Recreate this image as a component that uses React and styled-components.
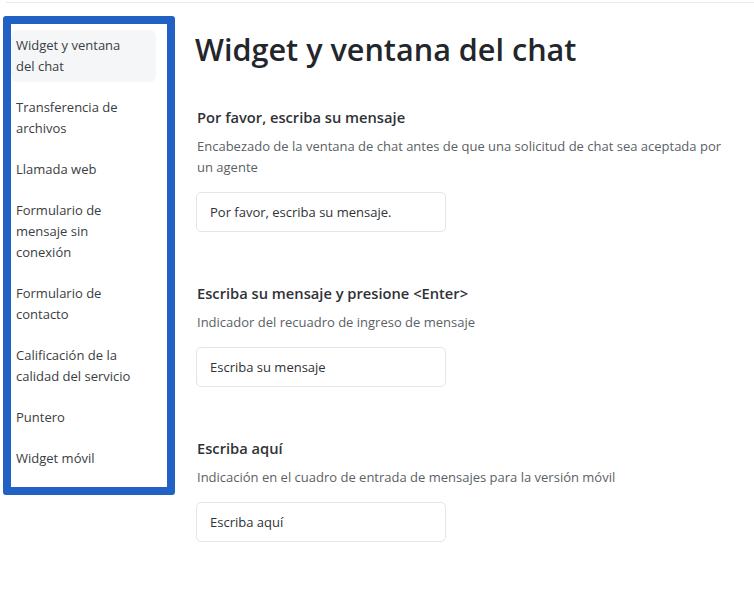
import React from 'react'
import styled, { createGlobalStyle } from 'styled-components'

const Global = createGlobalStyle`
  body {
    margin: 0;
    background: #fff;
    font-family: "Open Sans", "Noto Sans", sans-serif;
    color: #333;
  }
`

const TopRule = styled.div`
  margin: 2px 0 0 6px;
  height: 1px;
  background: #e8e9eb;
`

const Page = styled.div`
  display: flex;
  align-items: flex-start;
  gap: 20px;
  padding: 13px 0 0 3px;
`

const Sidebar = styled.nav`
  width: 145px;
  border: 8px solid #2161c3;
  border-radius: 3px;
  background: #fff;
  padding: 6px 11px 13px 0;
  display: flex;
  flex-direction: column;
  gap: 10px;
`

const NavItem = styled.a`
  display: block;
  padding: 5px 24px 5px 5px;
  font-size: 13px;
  line-height: 21px;
  color: #3a3d42;
  text-decoration: none;
  border-radius: 6px;
  background: ${p => (p.$active ? '#f5f6f8' : 'transparent')};
`

const Main = styled.main`
  flex: 1;
  padding-top: 14px;
`

const Title = styled.h1`
  margin: 0 0 38px;
  font-size: 30.6px;
  line-height: 38px;
  font-weight: 600;
  color: #23262b;
`

const Section = styled.section`
  padding-left: 2px;
  margin-bottom: 50px;
`

const Heading = styled.h2`
  margin: 0 0 8px;
  font-size: 14.7px;
  line-height: 22px;
  font-weight: 600;
  color: #2f3237;
`

const Desc = styled.p`
  margin: 0 0 14px;
  font-size: 13px;
  line-height: 21px;
  color: #5b5f66;
  max-width: 535px;
`

const Field = styled.div`
  box-sizing: border-box;
  width: 250px;
  height: 40px;
  margin-left: -1px;
  border: 1px solid #e3e5e8;
  border-radius: 5px;
  padding: 0 13px;
  display: flex;
  align-items: center;
  font-size: 13px;
  color: #2f3237;
`

const navItems = [
  'Widget y ventana del chat',
  'Transferencia de archivos',
  'Llamada web',
  'Formulario de mensaje sin conexión',
  'Formulario de contacto',
  'Calificación de la calidad del servicio',
  'Puntero',
  'Widget móvil',
]

const sections = [
  {
    heading: 'Por favor, escriba su mensaje',
    desc: 'Encabezado de la ventana de chat antes de que una solicitud de chat sea aceptada por un agente',
    value: 'Por favor, escriba su mensaje.',
  },
  {
    heading: 'Escriba su mensaje y presione <Enter>',
    desc: 'Indicador del recuadro de ingreso de mensaje',
    value: 'Escriba su mensaje',
  },
  {
    heading: 'Escriba aquí',
    desc: 'Indicación en el cuadro de entrada de mensajes para la versión móvil',
    value: 'Escriba aquí',
  },
]

const App = () => {
  return (
    <>
      <Global />
      <TopRule />
      <Page>
        <Sidebar>
          {navItems.map((item, i) => (
            <NavItem key={item} href="#" $active={i === 0}>
              {item}
            </NavItem>
          ))}
        </Sidebar>
        <Main>
          <Title>Widget y ventana del chat</Title>
          {sections.map(s => (
            <Section key={s.heading}>
              <Heading>{s.heading}</Heading>
              <Desc>{s.desc}</Desc>
              <Field>{s.value}</Field>
            </Section>
          ))}
        </Main>
      </Page>
    </>
  )
}

export default App
